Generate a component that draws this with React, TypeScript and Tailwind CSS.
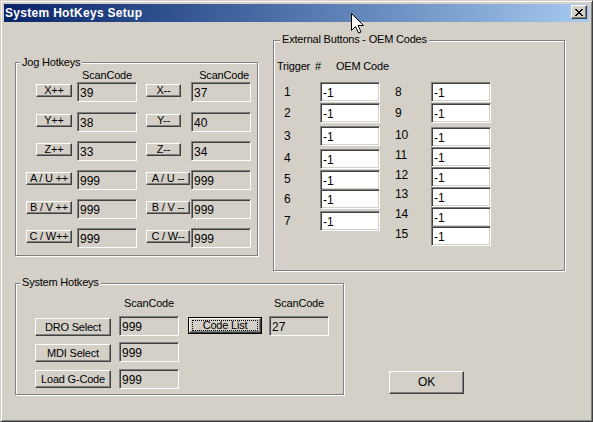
const sunken =
  "border border-t-[#808080] border-l-[#808080] border-r-white border-b-white shadow-[inset_1px_1px_0_#404040,inset_-1px_-1px_0_#d4d0c8]";
const raised =
  "border border-t-white border-l-white border-r-[#404040] border-b-[#404040] shadow-[inset_-1px_-1px_0_#808080] bg-[#d4d0c8]";
const etched =
  "relative border border-[#808080] shadow-[inset_1px_1px_0_#ffffff,1px_1px_0_#ffffff]";

const jogRows = [
  { mt: "mt-0", a: "X++", aw: "w-[36px]", av: "39", b: "X--", bw: "w-[35px]", bv: "37" },
  { mt: "mt-[10px]", a: "Y++", aw: "w-[36px]", av: "38", b: "Y--", bw: "w-[35px]", bv: "40" },
  { mt: "mt-[9px]", a: "Z++", aw: "w-[36px]", av: "33", b: "Z--", bw: "w-[35px]", bv: "34" },
  { mt: "mt-[9px]", a: "A / U ++", aw: "w-[46px]", av: "999", b: "A / U --", bw: "w-[44px]", bv: "999" },
  { mt: "mt-[9px]", a: "B / V ++", aw: "w-[46px]", av: "999", b: "B / V --", bw: "w-[44px]", bv: "999" },
  { mt: "mt-[9px]", a: "C / W++", aw: "w-[46px]", av: "999", b: "C / W--", bw: "w-[44px]", bv: "999" },
];

const oemLeft = [
  { n: "1", mt: "mt-0", lb: "" },
  { n: "2", mt: "mt-[1px]", lb: "" },
  { n: "3", mt: "mt-[3px]", lb: "" },
  { n: "4", mt: "mt-[3px]", lb: "mb-[2px]" },
  { n: "5", mt: "mt-[1px]", lb: "mb-[2px]" },
  { n: "6", mt: "-mt-[1px]", lb: "" },
  { n: "7", mt: "mt-[2px]", lb: "" },
];

const oemRight = [
  { n: "8", mt: "mt-0", lb: "" },
  { n: "9", mt: "mt-[1px]", lb: "" },
  { n: "10", mt: "mt-[4px]", lb: "mb-[4px]" },
  { n: "11", mt: "mt-0", lb: "mb-[3px]" },
  { n: "12", mt: "mt-0", lb: "mb-[4px]" },
  { n: "13", mt: "mt-0", lb: "mb-[6px]" },
  { n: "14", mt: "mt-0", lb: "mb-[5px]" },
  { n: "15", mt: "-mt-[1px]", lb: "mb-[3px]" },
];

function Field({ value, white }: { value: string; white?: boolean }) {
  return (
    <div
      className={`${sunken} w-[60px] h-[20px] pl-[2px] pt-[1px] text-[12px] leading-[18px] tracking-normal ${
        white ? "bg-white" : "bg-[#d4d0c8]"
      }`}
    >
      {value}
    </div>
  );
}

function JogButton({ label, width }: { label: string; width: string }) {
  return (
    <div
      className={`${raised} ${width} h-[13px] mt-[2px] leading-[11px] text-center whitespace-nowrap`}
    >
      {label}
    </div>
  );
}

function Legend({ text, left, top }: { text: string; left: string; top: string }) {
  return (
    <span
      className={`absolute ${left} ${top} px-[2px] bg-[#d4d0c8] leading-[13px] whitespace-nowrap`}
    >
      {text}
    </span>
  );
}

function JogHotkeys() {
  return (
    <div className={`${etched} ml-[11px] mt-[40px] w-[243px] h-[194px] pt-[6px]`}>
      <Legend text="Jog Hotkeys" left="left-[4px]" top="-top-[7px]" />
      <div className="flex h-[13px] leading-[13px]">
        <div className="w-[61px]" />
        <div className="w-[60px] text-center">ScanCode</div>
        <div className="w-[54px]" />
        <div className="w-[60px] text-right pr-[2px]">ScanCode</div>
      </div>
      {jogRows.map((r) => (
        <div key={r.a} className={`flex items-start ${r.mt}`}>
          <div className="w-[56px] flex justify-end">
            <JogButton label={r.a} width={r.aw} />
          </div>
          <div className="ml-[5px]">
            <Field value={r.av} />
          </div>
          <div className="ml-[9px] w-[45px]">
            <JogButton label={r.b} width={r.bw} />
          </div>
          <Field value={r.bv} />
        </div>
      ))}
    </div>
  );
}

function OemColumn({
  rows,
  className,
}: {
  rows: { n: string; mt: string; lb: string }[];
  className: string;
}) {
  return (
    <div className={`flex flex-col ${className}`}>
      {rows.map((r) => (
        <div key={r.n} className={`flex items-center ${r.mt}`}>
          <span className={`w-[36px] text-[12px] leading-[13px] ${r.lb}`}>{r.n}</span>
          <Field value="-1" white />
        </div>
      ))}
    </div>
  );
}

function ExternalButtons() {
  return (
    <div className={`${etched} ml-[15px] mt-[18px] w-[292px] h-[231px]`}>
      <Legend text="External Buttons - OEM Codes" left="left-[6px]" top="-top-[8px]" />
      <div className="flex mt-[19px] h-[13px] leading-[13px] whitespace-nowrap">
        <span className="ml-[3px] w-[38px]">Trigger</span>
        <span className="w-[21px]">#</span>
        <span>OEM Code</span>
      </div>
      <div className="flex items-start mt-[9px]">
        <OemColumn rows={oemLeft} className="ml-[10px]" />
        <OemColumn rows={oemRight} className="ml-[15px]" />
      </div>
    </div>
  );
}

function SysButton({ label, mt }: { label: string; mt: string }) {
  return (
    <div
      className={`${raised} ml-[19px] ${mt} w-[76px] h-[18px] leading-[16px] text-center whitespace-nowrap`}
    >
      {label}
    </div>
  );
}

function SystemHotkeys() {
  return (
    <div className={`${etched} ml-[11px] w-[329px] h-[112px] pt-[13px]`}>
      <Legend text="System Hotkeys" left="left-[4px]" top="-top-[8px]" />
      <div className="flex h-[13px] leading-[13px]">
        <div className="w-[103px]" />
        <div className="w-[60px] text-center">ScanCode</div>
        <div className="w-[90px]" />
        <div className="w-[60px] text-center">ScanCode</div>
      </div>
      <div className="flex items-start mt-[6px]">
        <SysButton label="DRO Select" mt="mt-[2px]" />
        <div className="ml-[8px]">
          <Field value="999" />
        </div>
        <div className="ml-[9px] mt-[1px] w-[74px] h-[17px] border border-black">
          <div className="h-full border border-t-white border-l-white border-r-[#404040] border-b-[#404040] shadow-[inset_-1px_-1px_0_#808080] px-[2px] py-[1px]">
            <div className="h-full border border-dotted border-black leading-[9px] text-center whitespace-nowrap">
              Code List
            </div>
          </div>
        </div>
        <div className="ml-[7px]">
          <Field value="27" />
        </div>
      </div>
      <div className="flex items-start mt-[6px]">
        <SysButton label="MDI Select" mt="mt-[2px]" />
        <div className="ml-[8px]">
          <Field value="999" />
        </div>
      </div>
      <div className="flex items-start mt-[7px]">
        <SysButton label="Load G-Code" mt="mt-[1px]" />
        <div className="ml-[8px]">
          <Field value="999" />
        </div>
      </div>
    </div>
  );
}

function CloseGlyph() {
  return (
    <svg width="8" height="7" viewBox="0 0 8 7" shapeRendering="crispEdges">
      <path
        fill="#000"
        d="M0 0h2v1H0zM6 0h2v1H6zM1 1h2v1H1zM5 1h2v1H5zM2 2h4v1H2zM3 3h2v1H3zM2 4h4v1H2zM1 5h2v1H1zM5 5h2v1H5zM0 6h2v1H0zM6 6h2v1H6z"
      />
    </svg>
  );
}

export default function App() {
  return (
    <div className="relative w-[593px] h-[422px] bg-[#d4d0c8] border border-t-[#d4d0c8] border-l-[#d4d0c8] border-r-[#404040] border-b-[#404040] shadow-[inset_1px_1px_0_#ffffff,inset_-1px_-1px_0_#808080] p-[3px] text-black text-[11px] tracking-[-0.2px] font-['Liberation_Sans',Arial,sans-serif] overflow-hidden">
      <div className="flex items-start justify-between h-[18px] bg-linear-to-r from-[#0a246a] to-[#a6caf0]">
        <span className="pl-[1px] leading-[18px] text-white font-bold text-[12px] tracking-[0.3px]">
          System HotKeys Setup
        </span>
        <div className={`${raised} mt-[1px] mr-[2px] w-[16px] h-[14px] flex items-center justify-center`}>
          <CloseGlyph />
        </div>
      </div>

      <div className="flex flex-col">
        <div className="flex items-start">
          <JogHotkeys />
          <ExternalButtons />
        </div>
        <div className="flex items-start mt-[12px]">
          <SystemHotkeys />
          <div
            className={`${raised} ml-[45px] mt-[88px] w-[75px] h-[23px] leading-[21px] text-center text-[12px]`}
          >
            OK
          </div>
        </div>
      </div>

      <svg
        className="absolute left-[350px] top-[12px]"
        width="13"
        height="21"
        viewBox="0 0 13 21"
      >
        <path
          d="M0.5 0.5V17.5L4.5 13.5L7.5 20L10 19L7 12.5H12.5Z"
          fill="#fff"
          stroke="#000"
          strokeWidth="1"
        />
      </svg>
    </div>
  );
}
